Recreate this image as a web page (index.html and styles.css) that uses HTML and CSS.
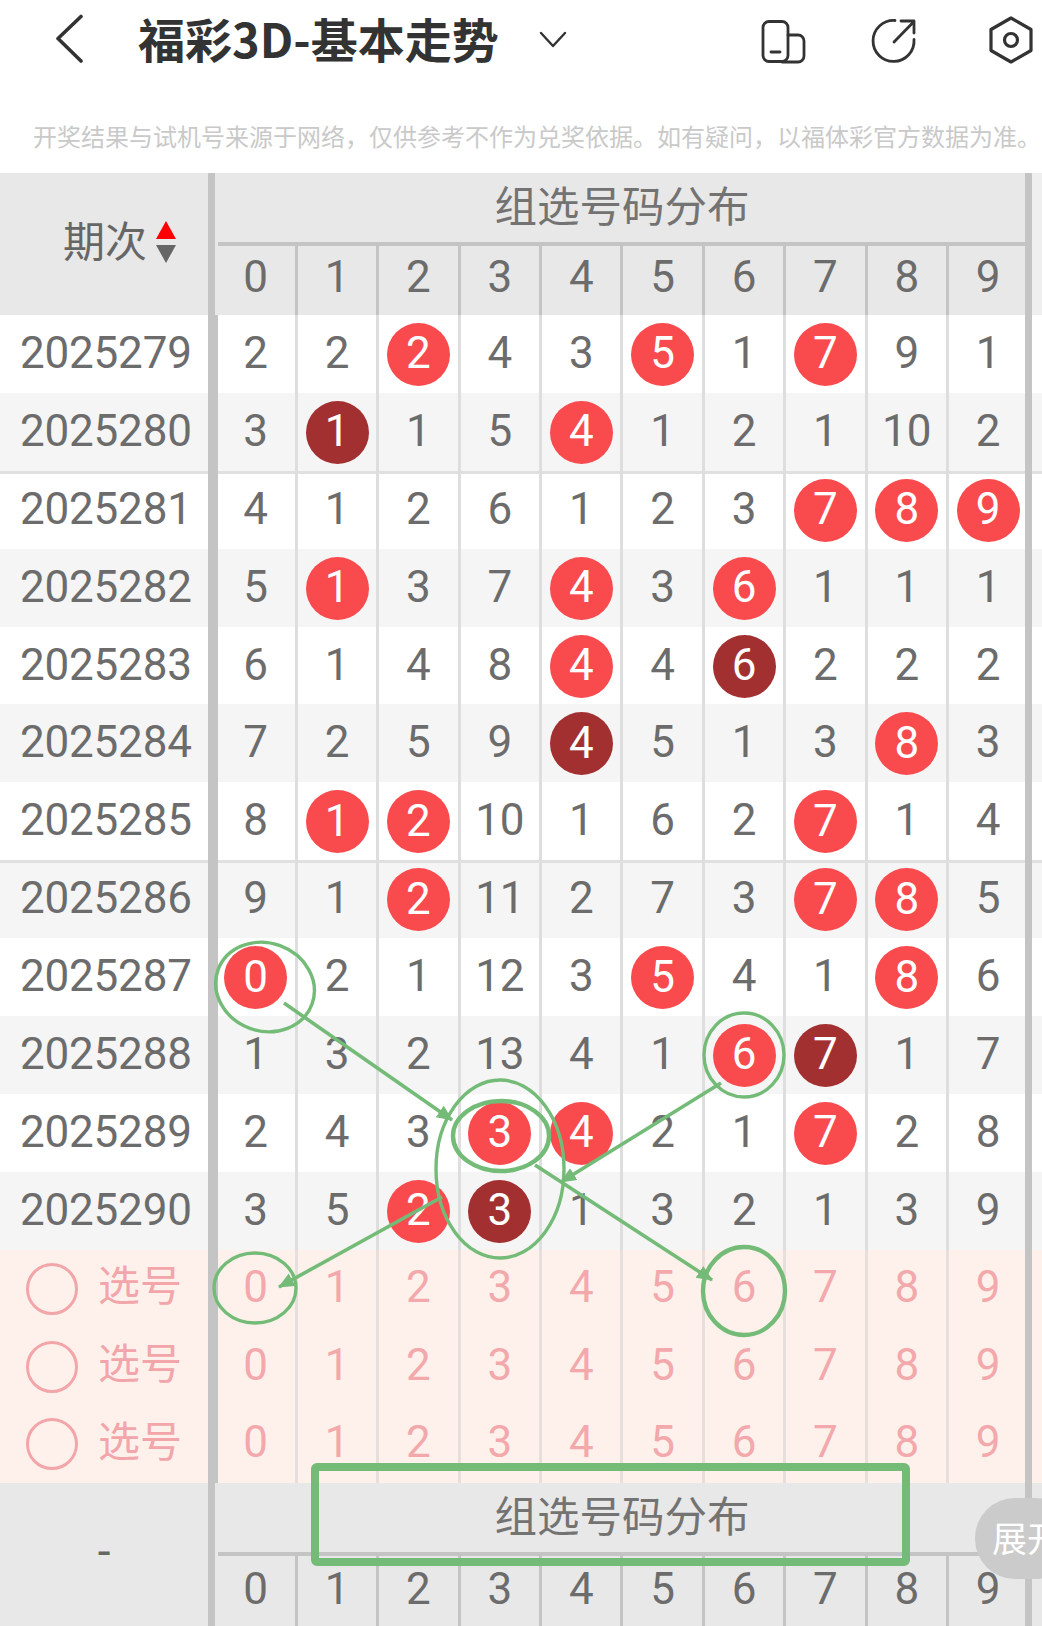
FILE: index.html
```html
<!DOCTYPE html>
<html lang="zh-CN">
<head>
<meta charset="utf-8">
<title>福彩3D-基本走势</title>
<link rel="stylesheet" href="styles.css">
</head>
<body>
<div class="page">
  <header class="topbar">
    <div class="titlebar">
      <svg class="icon back" viewBox="54 14 30 52" width="30" height="52"><path d="M81 16.5 58 38.5 81 61"/></svg>
      <h1 class="title">福彩3D-基本走势</h1>
      <svg class="icon drop" viewBox="538 14 30 52" width="30" height="52"><path d="M541 33 553 46 565 33"/></svg>
      <svg class="icon device" viewBox="760 14 48 52" width="48" height="52"><rect x="763" y="21.5" width="25" height="40" rx="6"/><path d="M788 35h10a6 6 0 0 1 6 6v15a6 6 0 0 1-6 6h-16M771 52h9"/></svg>
      <svg class="icon share" viewBox="869 14 48 52" width="48" height="52"><path d="M894 20.5A20.5 20.5 0 1 0 913 39.500M893 42 913 21.500M900 21h13v12"/></svg>
      <svg class="icon hex" viewBox="986 14 48 52" width="48" height="52"><path d="M1010 18 1030 29.500V50.500L1010 62 990 50.500V29.500Z"/><circle cx="1010" cy="40" r="6.500"/></svg>
    </div>
    <p class="note">开奖结果与试机号来源于网络&#xFF0C;仅供参考不作为兑奖依据。如有疑问&#xFF0C;以福体彩官方数据为准。</p>
  </header>

  <main class="table">
    <div class="head">
      <div class="head-left"><span class="head-label">期次</span><span class="sort"><i class="up"></i><i class="down"></i></span></div>
      <div class="sep"></div>
      <div class="head-main">
        <div class="group-title"><span>组选号码分布</span></div>
        <div class="digits">
          <div class="c"><span class="n">0</span></div><div class="c"><span class="n">1</span></div><div class="c"><span class="n">2</span></div><div class="c"><span class="n">3</span></div><div class="c"><span class="n">4</span></div><div class="c"><span class="n">5</span></div><div class="c"><span class="n">6</span></div><div class="c"><span class="n">7</span></div><div class="c"><span class="n">8</span></div><div class="c"><span class="n">9</span></div>
        </div>
      </div>
      <div class="gutter"></div>
    </div>

    <div class="row"><div class="period">2025279</div><div class="sep wide"></div><div class="c"><span class="n">2</span></div><div class="c"><span class="n">2</span></div><div class="c"><span class="n r">2</span></div><div class="c"><span class="n">4</span></div><div class="c"><span class="n">3</span></div><div class="c"><span class="n r">5</span></div><div class="c"><span class="n">1</span></div><div class="c"><span class="n r">7</span></div><div class="c"><span class="n">9</span></div><div class="c"><span class="n">1</span></div></div>
    <div class="row alt"><div class="period">2025280</div><div class="sep wide"></div><div class="c"><span class="n">3</span></div><div class="c"><span class="n d">1</span></div><div class="c"><span class="n">1</span></div><div class="c"><span class="n">5</span></div><div class="c"><span class="n r">4</span></div><div class="c"><span class="n">1</span></div><div class="c"><span class="n">2</span></div><div class="c"><span class="n">1</span></div><div class="c"><span class="n">10</span></div><div class="c"><span class="n">2</span></div></div>
    <div class="row ruled"><div class="period">2025281</div><div class="sep wide"></div><div class="c"><span class="n">4</span></div><div class="c"><span class="n">1</span></div><div class="c"><span class="n">2</span></div><div class="c"><span class="n">6</span></div><div class="c"><span class="n">1</span></div><div class="c"><span class="n">2</span></div><div class="c"><span class="n">3</span></div><div class="c"><span class="n r">7</span></div><div class="c"><span class="n r">8</span></div><div class="c"><span class="n r">9</span></div></div>
    <div class="row alt"><div class="period">2025282</div><div class="sep wide"></div><div class="c"><span class="n">5</span></div><div class="c"><span class="n r">1</span></div><div class="c"><span class="n">3</span></div><div class="c"><span class="n">7</span></div><div class="c"><span class="n r">4</span></div><div class="c"><span class="n">3</span></div><div class="c"><span class="n r">6</span></div><div class="c"><span class="n">1</span></div><div class="c"><span class="n">1</span></div><div class="c"><span class="n">1</span></div></div>
    <div class="row"><div class="period">2025283</div><div class="sep wide"></div><div class="c"><span class="n">6</span></div><div class="c"><span class="n">1</span></div><div class="c"><span class="n">4</span></div><div class="c"><span class="n">8</span></div><div class="c"><span class="n r">4</span></div><div class="c"><span class="n">4</span></div><div class="c"><span class="n d">6</span></div><div class="c"><span class="n">2</span></div><div class="c"><span class="n">2</span></div><div class="c"><span class="n">2</span></div></div>
    <div class="row alt"><div class="period">2025284</div><div class="sep wide"></div><div class="c"><span class="n">7</span></div><div class="c"><span class="n">2</span></div><div class="c"><span class="n">5</span></div><div class="c"><span class="n">9</span></div><div class="c"><span class="n d">4</span></div><div class="c"><span class="n">5</span></div><div class="c"><span class="n">1</span></div><div class="c"><span class="n">3</span></div><div class="c"><span class="n r">8</span></div><div class="c"><span class="n">3</span></div></div>
    <div class="row"><div class="period">2025285</div><div class="sep wide"></div><div class="c"><span class="n">8</span></div><div class="c"><span class="n r">1</span></div><div class="c"><span class="n r">2</span></div><div class="c"><span class="n">10</span></div><div class="c"><span class="n">1</span></div><div class="c"><span class="n">6</span></div><div class="c"><span class="n">2</span></div><div class="c"><span class="n r">7</span></div><div class="c"><span class="n">1</span></div><div class="c"><span class="n">4</span></div></div>
    <div class="row alt ruled"><div class="period">2025286</div><div class="sep wide"></div><div class="c"><span class="n">9</span></div><div class="c"><span class="n">1</span></div><div class="c"><span class="n r">2</span></div><div class="c"><span class="n">11</span></div><div class="c"><span class="n">2</span></div><div class="c"><span class="n">7</span></div><div class="c"><span class="n">3</span></div><div class="c"><span class="n r">7</span></div><div class="c"><span class="n r">8</span></div><div class="c"><span class="n">5</span></div></div>
    <div class="row"><div class="period">2025287</div><div class="sep wide"></div><div class="c"><span class="n r">0</span></div><div class="c"><span class="n">2</span></div><div class="c"><span class="n">1</span></div><div class="c"><span class="n">12</span></div><div class="c"><span class="n">3</span></div><div class="c"><span class="n r">5</span></div><div class="c"><span class="n">4</span></div><div class="c"><span class="n">1</span></div><div class="c"><span class="n r">8</span></div><div class="c"><span class="n">6</span></div></div>
    <div class="row alt"><div class="period">2025288</div><div class="sep wide"></div><div class="c"><span class="n">1</span></div><div class="c"><span class="n">3</span></div><div class="c"><span class="n">2</span></div><div class="c"><span class="n">13</span></div><div class="c"><span class="n">4</span></div><div class="c"><span class="n">1</span></div><div class="c"><span class="n r">6</span></div><div class="c"><span class="n d">7</span></div><div class="c"><span class="n">1</span></div><div class="c"><span class="n">7</span></div></div>
    <div class="row"><div class="period">2025289</div><div class="sep wide"></div><div class="c"><span class="n">2</span></div><div class="c"><span class="n">4</span></div><div class="c"><span class="n">3</span></div><div class="c"><span class="n r">3</span></div><div class="c"><span class="n r">4</span></div><div class="c"><span class="n">2</span></div><div class="c"><span class="n">1</span></div><div class="c"><span class="n r">7</span></div><div class="c"><span class="n">2</span></div><div class="c"><span class="n">8</span></div></div>
    <div class="row alt"><div class="period">2025290</div><div class="sep wide"></div><div class="c"><span class="n">3</span></div><div class="c"><span class="n">5</span></div><div class="c"><span class="n r">2</span></div><div class="c"><span class="n d">3</span></div><div class="c"><span class="n">1</span></div><div class="c"><span class="n">3</span></div><div class="c"><span class="n">2</span></div><div class="c"><span class="n">1</span></div><div class="c"><span class="n">3</span></div><div class="c"><span class="n">9</span></div></div>

    <div class="row pick"><div class="pick-left"><i class="radio"></i><span class="pick-label">选号</span></div><div class="sep wide"></div><div class="c"><span class="n">0</span></div><div class="c"><span class="n">1</span></div><div class="c"><span class="n">2</span></div><div class="c"><span class="n">3</span></div><div class="c"><span class="n">4</span></div><div class="c"><span class="n">5</span></div><div class="c"><span class="n">6</span></div><div class="c"><span class="n">7</span></div><div class="c"><span class="n">8</span></div><div class="c"><span class="n">9</span></div></div>
    <div class="row pick"><div class="pick-left"><i class="radio"></i><span class="pick-label">选号</span></div><div class="sep wide"></div><div class="c"><span class="n">0</span></div><div class="c"><span class="n">1</span></div><div class="c"><span class="n">2</span></div><div class="c"><span class="n">3</span></div><div class="c"><span class="n">4</span></div><div class="c"><span class="n">5</span></div><div class="c"><span class="n">6</span></div><div class="c"><span class="n">7</span></div><div class="c"><span class="n">8</span></div><div class="c"><span class="n">9</span></div></div>
    <div class="row pick last"><div class="pick-left"><i class="radio"></i><span class="pick-label">选号</span></div><div class="sep wide"></div><div class="c"><span class="n">0</span></div><div class="c"><span class="n">1</span></div><div class="c"><span class="n">2</span></div><div class="c"><span class="n">3</span></div><div class="c"><span class="n">4</span></div><div class="c"><span class="n">5</span></div><div class="c"><span class="n">6</span></div><div class="c"><span class="n">7</span></div><div class="c"><span class="n">8</span></div><div class="c"><span class="n">9</span></div></div>

    <div class="head foot">
      <div class="head-left foot-left"><span class="dash">-</span></div>
      <div class="sep"></div>
      <div class="head-main">
        <div class="group-title"><span>组选号码分布</span></div>
        <div class="digits">
          <div class="c"><span class="n">0</span></div><div class="c"><span class="n">1</span></div><div class="c"><span class="n">2</span></div><div class="c"><span class="n">3</span></div><div class="c"><span class="n">4</span></div><div class="c"><span class="n">5</span></div><div class="c"><span class="n">6</span></div><div class="c"><span class="n">7</span></div><div class="c"><span class="n">8</span></div><div class="c"><span class="n">9</span></div>
        </div>
      </div>
      <div class="gutter"></div>
    </div>
    <div class="rail"></div>
  </main>

  <div class="expand">展开</div>

  <svg class="marks" viewBox="0 0 1042 1626" width="1042" height="1626">
    <defs>
      <marker id="head" markerUnits="userSpaceOnUse" markerWidth="18" markerHeight="16" refX="15" refY="7" orient="auto"><path class="head-fill" d="M0 0 16 7 0 14Z"/></marker>
    </defs>
    <ellipse cx="265" cy="987" rx="50" ry="44" transform="rotate(20 265 987)"/>
    <ellipse cx="744" cy="1055" rx="40" ry="42"/>
    <ellipse cx="500" cy="1169" rx="64" ry="89"/>
    <ellipse class="thick" cx="501" cy="1136" rx="48" ry="35"/>
    <ellipse cx="255" cy="1288" rx="41" ry="35"/>
    <ellipse class="thick" cx="744" cy="1291" rx="41" ry="44"/>
    <path class="arrow" marker-end="url(#head)" d="M284 1003 452 1120"/>
    <path class="arrow" marker-end="url(#head)" d="M721 1083 561 1182"/>
    <path class="arrow" marker-end="url(#head)" d="M535 1165 712 1280"/>
    <path class="arrow" marker-end="url(#head)" d="M442 1197 279 1287"/>
    <rect class="box" x="315" y="1467" width="591" height="95" rx="2"/>
  </svg>
</div>
</body>
</html>
```
FILE: styles.css
```css
* { box-sizing: border-box; }
html, body { margin: 0; padding: 0; background: #fff; }
body { font-family: Roboto, "Noto Sans CJK SC", sans-serif; }
.page { position: relative; width: 1042px; height: 1626px; overflow: hidden; }

/* top bar */
.topbar { height: 173px; background: #fff; }
.titlebar { display: flex; align-items: center; height: 80px; padding-left: 54px; }
.icon { fill: none; stroke: #333; stroke-width: 2.8; stroke-linecap: round; stroke-linejoin: round; flex: none; }
.back { stroke-width: 3.6; }
.drop { stroke-width: 2.4; margin-left: 40px; }
.device { margin-left: 192px; }
.share { margin-left: 62px; }
.hex { margin-left: 69px; stroke-width: 3.2; }
.title { margin: 0 0 0 54px; padding-bottom: 4px; font: 700 47px/52px "Noto Sans CJK SC", sans-serif; color: #333; white-space: nowrap; width: 360px; }
.note { margin: 41px 0 0; padding-left: 33px; font: 400 24px/30px "Noto Sans CJK SC", sans-serif; color: #c9c9c9; white-space: nowrap; }

/* table */
.table { position: relative; }
.head, .row { display: grid; grid-template-columns: 208px 7px repeat(10, 81.4px) 13px; }
.head { height: 142px; background: #e8e8e8; grid-template-columns: 208px 7px 814px 13px; }
.foot { height: 143px; }
.head-left { display: flex; align-items: center; padding: 0 0 10px 63px; }
.head-label { font: 400 42px/50px "Noto Sans CJK SC", sans-serif; color: #666; }
.sort { display: flex; flex-direction: column; gap: 6px; margin: 6px 0 0 9px; }
.up, .down { display: block; width: 0; height: 0; border-left: 10.500px solid transparent; border-right: 10.500px solid transparent; }
.up { border-bottom: 18px solid #f00; }
.down { border-top: 18px solid #666; }
.foot-left { justify-content: center; padding: 0 0 6px; }
.dash { font: 400 46px/50px Roboto, sans-serif; color: #666; }
.sep { background: #c4c4c4; }
.sep.wide { box-shadow: 3px 0 0 #c4c4c4; }
.head-main { display: flex; flex-direction: column; min-width: 0; }
.group-title { flex: none; height: 73px; margin-left: 3px; border-bottom: 4px solid #c4c4c4; display: flex; justify-content: center; align-items: center; padding: 0 3px 7px 0; font: 400 42.500px/50px "Noto Sans CJK SC", sans-serif; color: #737373; }
.digits { flex: 1; display: grid; grid-template-columns: repeat(10, 81.4px); }
.gutter { background: #efefef; }
.foot .gutter { background: #e8e8e8; }
.rail { position: absolute; left: 1025px; top: 0; bottom: 0; width: 7px; background: #c4c4c4; }

.row { height: 77.900px; background: #fff; }
.row.alt { background: #f5f5f5; }
.row.ruled { box-shadow: inset 0 3px 0 #e0e0e0; }
.period { display: flex; align-items: center; padding: 0 0 2px 20px; font: 400 44px/50px Roboto, sans-serif; letter-spacing: -0.2px; color: #6c6c6c; }

.c { position: relative; display: flex; align-items: center; justify-content: center; font: 400 44px/50px Roboto, sans-serif; color: #6c6c6c; }
.c::after { content: ""; position: absolute; top: 0; bottom: 0; right: -1.500px; width: 3px; background: #dedede; }
.c:last-child::after { display: none; }
.digits .c::after { background: #c4c4c4; }
.n { display: block; padding-bottom: 2px; }
.digits .n { padding-bottom: 8px; }
.foot .digits .n { padding-bottom: 4px; }
.r, .d { position: relative; z-index: 1; display: flex; align-items: center; justify-content: center; width: 63px; height: 63px; margin-top: 1px; border-radius: 50%; color: #fff; }
.r { background: #f94a4d; }
.d { background: #a33030; }

.pick { height: 78px; background: #fef1ec; }
.pick.last { height: 77px; }
.pick .c { color: #f3a9ac; }
.pick .n { padding-bottom: 4px; }
.pick .c::after { background: #e6dfdb; }
.pick-left { display: flex; align-items: center; padding-left: 26px; }
.radio { display: block; width: 52px; height: 52px; border: 3px solid #f3a6a9; border-radius: 50%; flex: none; }
.pick-label { margin-left: 20px; padding-bottom: 11px; font: 400 42px/50px "Noto Sans CJK SC", sans-serif; color: #f3a6a9; }

/* overlays */
.expand { position: absolute; left: 975px; top: 1498px; width: 100px; height: 81px; border-radius: 40px; background: #cbcbcb; color: #fff; font: 400 35px/77px "Noto Sans CJK SC", sans-serif; padding-left: 17px; white-space: nowrap; z-index: 3; }
.marks { position: absolute; left: 0; top: 0; z-index: 2; pointer-events: none; fill: none; stroke: #74bb78; stroke-width: 3.4; }
.marks .thick { stroke-width: 4.4; }
.marks .arrow { stroke-width: 3.6; }
.marks .box { stroke-width: 8; }
.head-fill { fill: #74bb78; stroke: none; }
```
